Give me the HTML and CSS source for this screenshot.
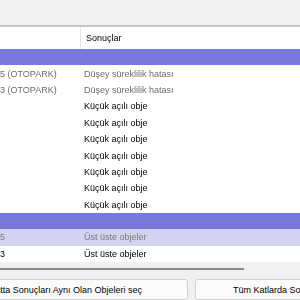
FILE: index.html
```html
<!DOCTYPE html>
<html>
<head>
<meta charset="utf-8">
<link rel="stylesheet" href="styles.css">
</head>
<body>
<div class="window">
  <div class="toolbar"></div>
  <div class="grid">
    <div class="row header">
      <div class="cell c1"></div>
      <div class="cell c2">Sonuçlar</div>
    </div>
    <div class="row group"><div class="cell c1"></div><div class="cell c2"></div></div>
    <div class="row dim"><div class="cell c1">5 (OTOPARK)</div><div class="cell c2">Düşey süreklilik hatası</div></div>
    <div class="row dim"><div class="cell c1">3 (OTOPARK)</div><div class="cell c2">Düşey süreklilik hatası</div></div>
    <div class="row"><div class="cell c1"></div><div class="cell c2">Küçük açılı obje</div></div>
    <div class="row"><div class="cell c1"></div><div class="cell c2">Küçük açılı obje</div></div>
    <div class="row"><div class="cell c1"></div><div class="cell c2">Küçük açılı obje</div></div>
    <div class="row"><div class="cell c1"></div><div class="cell c2">Küçük açılı obje</div></div>
    <div class="row"><div class="cell c1"></div><div class="cell c2">Küçük açılı obje</div></div>
    <div class="row"><div class="cell c1"></div><div class="cell c2">Küçük açılı obje</div></div>
    <div class="row"><div class="cell c1"></div><div class="cell c2">Küçük açılı obje</div></div>
    <div class="row group"><div class="cell c1"></div><div class="cell c2"></div></div>
    <div class="row selected"><div class="cell c1">5</div><div class="cell c2">Üst üste objeler</div></div>
    <div class="row"><div class="cell c1">3</div><div class="cell c2">Üst üste objeler</div></div>
  </div>
  <div class="hscroll"><div class="thumb"></div></div>
  <div class="buttons">
    <div class="btn btn-left">Aynı Katta Sonuçları Aynı Olan Objeleri seç</div>
    <div class="btn btn-right">Tüm Katlarda Sonuçları Aynı Olan Objeleri seç</div>
  </div>
</div>
</body>
</html>
```

FILE: styles.css
```css
html, body {
  margin: 0;
  padding: 0;
  background: #ffffff;
  overflow: hidden;
}
.window {
  width: 300px;
  height: 300px;
  display: flex;
  flex-direction: column;
  font-family: "Liberation Sans", Arial, sans-serif;
  font-size: 9px;
  font-variant-ligatures: none;
  -webkit-font-smoothing: antialiased;
  color: #000;
  background: #f0f0f0;
  overflow: hidden;
}
.toolbar {
  height: 25px;
  background: #f0f0f0;
  border-bottom: 2px solid #c6c6c6;
  flex: none;
}
.grid {
  background: #fff;
  flex: none;
  display: flex;
  flex-direction: column;
  will-change: transform;
}
.row {
  display: grid;
  grid-template-columns: 81px 1fr;
  height: 16.4px;
  align-items: center;
  white-space: nowrap;
  overflow: hidden;
}
.cell {
  overflow: hidden;
  line-height: 16px;
}
.c1 {
  padding-left: 0;
}
.c2 {
  padding-left: 3px;
}
.header {
  height: 22px;
}
.header .c1 {
  height: 22px;
  border-right: 1px solid #e5e5e5;
  box-sizing: border-box;
}
.header .c2 {
  padding-left: 5px;
  color: #000;
}
.group {
  background: #7878dc;
}
.dim {
  color: #6d6d6d;
}
.selected {
  background: #d3d3f1;
  color: #7a7a7a;
}
.hscroll {
  height: 17px;
  flex: none;
  background: #f0f0f0;
  padding-top: 6px;
  box-sizing: border-box;
}
.thumb {
  width: 244px;
  height: 2px;
  background: #8a8a8a;
}
.buttons {
  flex: 1;
  display: flex;
  gap: 7px;
  background: #f0f0f0;
}
.btn {
  height: 21px;
  line-height: 20px;
  box-sizing: border-box;
  border: 1px solid #d0d0d0;
  border-radius: 3px;
  background: #fbfbfb;
  white-space: nowrap;
  overflow: hidden;
  flex: none;
}
.btn-left {
  width: 265px;
  margin-left: -77px;
  text-align: center;
}
.btn-right {
  width: 200px;
  padding-left: 37px;
}
```
